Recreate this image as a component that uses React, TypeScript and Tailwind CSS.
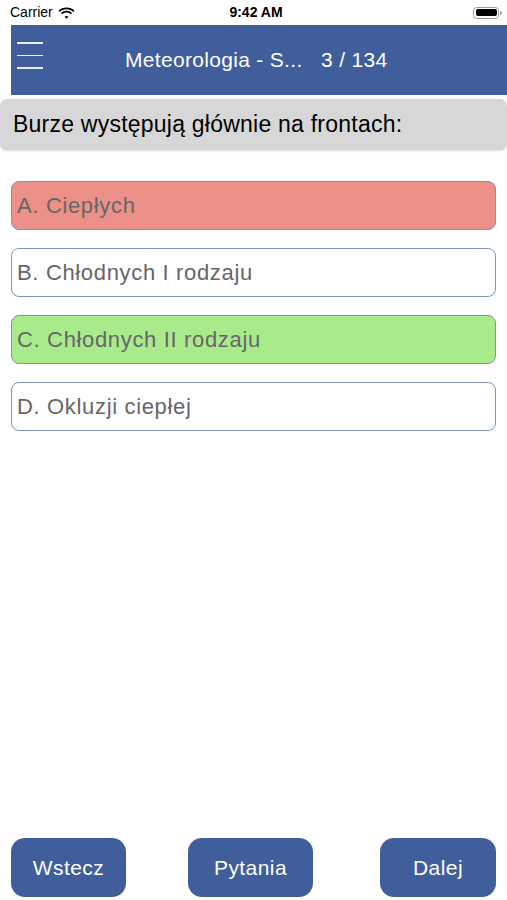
import React from "react"

const options = [
  { label: "A. Ciepłych", bg: "bg-[#eb9189]" },
  { label: "B. Chłodnych I rodzaju", bg: "bg-white" },
  { label: "C. Chłodnych II rodzaju", bg: "bg-[#a9eb8b]" },
  { label: "D. Okluzji ciepłej", bg: "bg-white" },
]

function Wifi() {
  return (
    <svg width="17" height="12" viewBox="0 0 17 12">
      <path d="M8.5 2.2c2.6 0 5 1 6.8 2.7l1.2-1.3C14.4 1.6 11.6.4 8.5.4S2.6 1.6.5 3.6l1.2 1.3C3.5 3.2 5.9 2.2 8.5 2.2z" fill="#000" />
      <path d="M8.5 5.6c1.6 0 3.1.6 4.3 1.7l1.2-1.3C12.5 4.6 10.6 3.8 8.5 3.8S4.5 4.6 3 6l1.2 1.3C5.4 6.2 6.9 5.6 8.5 5.6z" fill="#000" />
      <path d="M8.5 8.9c.8 0 1.4.3 1.9.8L8.5 11.8 6.6 9.7c.5-.5 1.1-.8 1.9-.8z" fill="#000" />
    </svg>
  )
}

function Battery() {
  return (
    <div className="flex items-center">
      <div className="h-[12px] w-[26px] rounded-[3.5px] border border-[#9a9a9a] p-[1.5px]">
        <div className="h-full w-full rounded-[2px] bg-black" />
      </div>
      <div className="ml-[1px] h-[4px] w-[1.5px] rounded-r-sm bg-[#9a9a9a]" />
    </div>
  )
}

export default function App() {
  return (
    <div className="flex h-[900px] w-[507px] flex-col bg-white font-['Liberation_Sans',Arial,sans-serif]">
      {/* status bar */}
      <div className="flex h-[25px] shrink-0 items-center justify-between pl-[10px] pr-[5px] text-[14px] text-black">
        <div className="flex w-[110px] items-center gap-[5px]">
          <span>Carrier</span>
          <Wifi />
        </div>
        <span className="font-bold">9:42 AM</span>
        <div className="flex w-[110px] justify-end">
          <Battery />
        </div>
      </div>

      {/* header */}
      <div className="ml-[11px] flex h-[70px] shrink-0 items-center bg-[#3f5e9b] text-white">
        <div className="mb-[9px] ml-[6px] flex w-[26px] flex-col gap-[11px]">
          <div className="h-[1.5px] bg-white/90" />
          <div className="h-[1.5px] bg-white/90" />
          <div className="h-[1.5px] bg-white/90" />
        </div>
        <div className="ml-[82px] text-[21px] tracking-[0.015em] whitespace-pre">Meteorologia - S...   3 / 134</div>
      </div>

      {/* question */}
      <div className="mt-[4px] flex h-[51px] shrink-0 items-center rounded-[7px] bg-[#d7d7d7] px-[13px] text-[23px] tracking-[0.01em] text-black shadow-[0_1px_2px_rgba(0,0,0,0.15)]">
        Burze występują głównie na frontach:
      </div>

      {/* answers */}
      <div className="mt-[31px] flex flex-col gap-[18px] px-[11px]">
        {options.map((o) => (
          <div
            key={o.label}
            className={`flex h-[49px] items-center rounded-[8px] border border-[#8090c2] px-[5px] text-[22px] tracking-[0.03em] text-[#666666] ${o.bg}`}
          >
            {o.label}
          </div>
        ))}
      </div>

      <div className="flex-1" />

      {/* bottom nav */}
      <div className="mb-[3px] flex items-center px-[11px]">
        <button className="h-[59px] w-[115px] rounded-[14px] bg-[#3f5e9b] text-[21px] tracking-[0.02em] text-white">Wstecz</button>
        <button className="ml-[62px] h-[59px] w-[125px] rounded-[14px] bg-[#3f5e9b] text-[21px] tracking-[0.02em] text-white">Pytania</button>
        <button className="ml-auto h-[59px] w-[116px] rounded-[14px] bg-[#3f5e9b] text-[21px] tracking-[0.02em] text-white">Dalej</button>
      </div>
    </div>
  )
}
